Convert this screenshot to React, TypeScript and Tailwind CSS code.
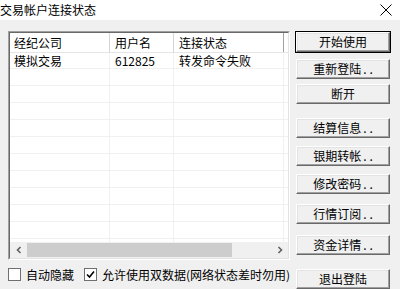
import React from 'react';

const buttons: { label: string; dots?: boolean; top: string; isDefault?: boolean }[] = [
  { label: '开始使用', top: 'mt-[11px]', isDefault: true },
  { label: '重新登陆', dots: true, top: 'mt-[5px]' },
  { label: '断开', top: 'mt-[3px]' },
  { label: '结算信息', dots: true, top: 'mt-[12px]' },
  { label: '银期转帐', dots: true, top: 'mt-[6px]' },
  { label: '修改密码', dots: true, top: 'mt-[6px]' },
  { label: '行情订阅', dots: true, top: 'mt-[8px]' },
  { label: '资金详情', dots: true, top: 'mt-[9px]' },
  { label: '退出登陆', top: 'mt-[12px]' },
];

function ClassicButton({ label, dots, top, isDefault }: { label: string; dots?: boolean; top: string; isDefault?: boolean }) {
  return (
    <div className={`${top} ${isDefault ? 'border border-black' : 'border border-transparent'} h-[22px] w-[96px]`}>
      <div className="flex h-full w-full items-center justify-center border-t border-l border-r border-b border-t-white border-l-white border-r-[#696969] border-b-[#696969] bg-[#f0f0f0] text-[12px] leading-none text-black shadow-[inset_-1px_-1px_0_#a0a0a0,inset_1px_1px_0_#e3e3e3]">
        {label}
        {dots && (
          <>
            <span className="ml-[2px]">.</span>
            <span className="ml-[3px]">.</span>
          </>
        )}
      </div>
    </div>
  );
}

function Checkbox({ checked, label, className }: { checked?: boolean; label: string; className?: string }) {
  return (
    <div className={`flex items-center whitespace-nowrap ${className ?? ''}`}>
      <div className="flex h-[13px] w-[13px] items-center justify-center border border-[#707070] bg-white">
        {checked && (
          <svg width="9" height="9" viewBox="0 0 9 9">
            <path d="M1 4.5 L3.5 7 L8 1.5" fill="none" stroke="#000" strokeWidth="1.6" />
          </svg>
        )}
      </div>
      <span className="ml-[5px] text-[12px] leading-none text-black">{label}</span>
    </div>
  );
}

function AccountList() {
  const rows = Array.from({ length: 11 });
  return (
    <div className="flex h-[229px] w-[282px] flex-col border border-t-[#a0a0a0] border-l-[#a0a0a0] border-r-white border-b-white">
      <div className="flex flex-1 flex-col overflow-hidden border border-t-[#696969] border-l-[#696969] border-r-[#e3e3e3] border-b-[#e3e3e3] bg-white">
        <div className="flex h-[20px] shrink-0 border-b border-[#e5e5e5] text-[12px] leading-none text-black">
          <div className="flex w-[100px] items-center border-r border-[#d5d5d5] pl-[4px]">经纪公司</div>
          <div className="flex w-[64px] items-center border-r border-[#d5d5d5] pl-[5px]">用户名</div>
          <div className="flex w-[110px] items-center border-r border-[#a0a0a0] pl-[5px]">连接状态</div>
          <div className="flex-1" />
        </div>
        <div className="flex-1 overflow-hidden">
          <div className="flex h-[16px] border-b border-[#f0f0f0] text-[12px] leading-none text-black">
            <div className="flex w-[100px] items-center border-r border-[#f0f0f0] pl-[4px]">模拟交易</div>
            <div className="flex w-[64px] items-center border-r border-[#f0f0f0] pl-[5px]">612825</div>
            <div className="flex w-[110px] items-center border-r border-[#f0f0f0] pl-[5px]">转发命令失败</div>
            <div className="flex-1" />
          </div>
          {rows.map((_, i) => (
            <div key={i} className="flex h-[17px] border-b border-[#f0f0f0]">
              <div className="w-[100px] border-r border-[#f0f0f0]" />
              <div className="w-[64px] border-r border-[#f0f0f0]" />
              <div className="w-[110px] border-r border-[#f0f0f0]" />
              <div className="flex-1" />
            </div>
          ))}
        </div>
        <div className="flex h-[16px] shrink-0 items-center bg-[#f0f0f0]">
          <div className="flex w-[17px] items-center justify-center">
            <svg width="8" height="8" viewBox="0 0 8 8">
              <path d="M5.5 1 L2.5 4 L5.5 7" fill="none" stroke="#606060" strokeWidth="1.6" />
            </svg>
          </div>
          <div className="h-[14px] w-[205px] bg-[#cdcdcd]" />
          <div className="flex-1" />
          <div className="flex w-[17px] items-center justify-center">
            <svg width="8" height="8" viewBox="0 0 8 8">
              <path d="M2.5 1 L5.5 4 L2.5 7" fill="none" stroke="#606060" strokeWidth="1.6" />
            </svg>
          </div>
        </div>
      </div>
    </div>
  );
}

export default function App() {
  return (
    <div className="flex h-[289px] w-[400px] flex-col overflow-hidden bg-[#f0f0f0] font-['Noto_Sans_CJK_SC','Noto_Sans',sans-serif]">
      <div className="flex h-[20px] shrink-0 items-center justify-between bg-white">
        <span className="text-[12px] leading-none text-black">交易帐户连接状态</span>
        <svg className="mr-[8px]" width="12" height="12" viewBox="0 0 12 12">
          <path d="M0.5 0.5 L11.5 11.5 M11.5 0.5 L0.5 11.5" stroke="#000" strokeWidth="1" />
        </svg>
      </div>
      <div className="flex flex-1">
        <div className="flex w-[290px] flex-col pl-[8px] pt-[11px]">
          <AccountList />
          <div className="mt-[8px] flex items-center">
            <Checkbox label="自动隐藏" />
            <Checkbox checked className="ml-[10px]" label="允许使用双数据(网络状态差时勿用)" />
          </div>
        </div>
        <div className="ml-[5px] flex flex-col">
          {buttons.map((b) => (
            <ClassicButton key={b.label} label={b.label} dots={b.dots} top={b.top} isDefault={b.isDefault} />
          ))}
        </div>
      </div>
      <div className="h-[1px] shrink-0 bg-[#f5c46a]" />
      <div className="h-[2px] shrink-0 bg-[#e4e4e4]" />
    </div>
  );
}
